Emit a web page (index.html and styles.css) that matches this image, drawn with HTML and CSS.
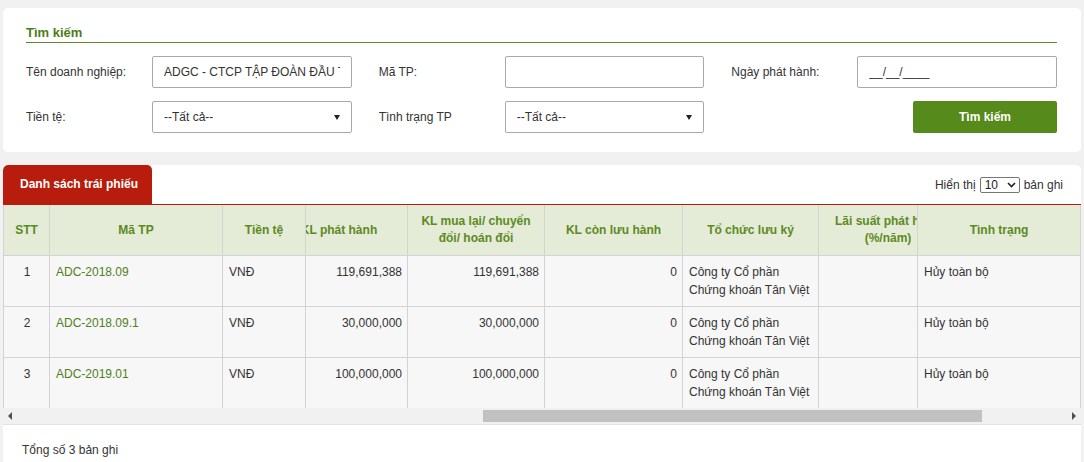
FILE: index.html
```html
<!DOCTYPE html>
<html lang="vi">
<head>
    <meta charset="UTF-8">
    <meta name="viewport" content="width=device-width, initial-scale=1.0">
    <title>Danh sách trái phiếu</title>
    <link rel="stylesheet" href="styles.css">
</head>
<body>
    <!-- Tìm kiếm -->
    <div class="khung tim_kiem">
        <h3 class="tieu_de">Tìm kiếm</h3>
        <div class="luoi">
            <div class="o">
                <label>Tên doanh nghiệp:</label>
                <div class="input"><span class="gia_tri">ADGC - CTCP TẬP ĐOÀN ĐẦU TƯ ĐỊA ỐC</span></div>
            </div>
            <div class="o">
                <label>Mã TP:</label>
                <div class="input"></div>
            </div>
            <div class="o">
                <label>Ngày phát hành:</label>
                <div class="input"><span class="gia_tri">__/__/____</span></div>
            </div>
            <div class="o">
                <label>Tiền tệ:</label>
                <div class="input chon"><span class="gia_tri">--Tất cả--</span></div>
            </div>
            <div class="o">
                <label>Tình trạng TP</label>
                <div class="input chon"><span class="gia_tri">--Tất cả--</span></div>
            </div>
            <div class="o">
                <button class="nut_tim">Tìm kiếm</button>
            </div>
        </div>
    </div>

    <!-- Danh sách -->
    <div class="khung danh_sach">
        <div class="thanh_tab">
            <div class="tab">Danh sách trái phiếu</div>
            <div class="hien_thi">
                Hiển thị
                <div class="chon_nho">
                    <span>10</span>
                    <svg width="9" height="6" viewBox="0 0 9 6"><polyline points="1,1 4.5,4.5 8,1" fill="none" stroke="#222" stroke-width="1.6"/></svg>
                </div>
                bản ghi
            </div>
        </div>

        <div class="bang_cuon">
            <table>
                <colgroup>
                    <col style="width:46px">
                    <col style="width:173px">
                    <col style="width:83px">
                    <col style="width:102px">
                    <col style="width:137px">
                    <col style="width:138px">
                    <col style="width:136px">
                    <col style="width:99px">
                    <col>
                </colgroup>
                <thead>
                    <tr>
                        <th>STT</th>
                        <th>Mã TP</th>
                        <th>Tiền tệ</th>
                        <th class="lech"><div class="lech_kl">KL phát hành</div></th>
                        <th>KL mua lại/ chuyển đổi/ hoán đổi</th>
                        <th>KL còn lưu hành</th>
                        <th>Tổ chức lưu ký</th>
                        <th class="lech"><div class="lech_ls">Lãi suất phát hành (%/năm)</div></th>
                        <th>Tình trạng</th>
                    </tr>
                </thead>
                <tbody>
                    <tr>
                        <td class="giua">1</td>
                        <td><a class="ma">ADC-2018.09</a></td>
                        <td>VNĐ</td>
                        <td class="so">119,691,388</td>
                        <td class="so">119,691,388</td>
                        <td class="so">0</td>
                        <td>Công ty Cổ phần Chứng khoán Tân Việt</td>
                        <td></td>
                        <td>Hủy toàn bộ</td>
                    </tr>
                    <tr>
                        <td class="giua">2</td>
                        <td><a class="ma">ADC-2018.09.1</a></td>
                        <td>VNĐ</td>
                        <td class="so">30,000,000</td>
                        <td class="so">30,000,000</td>
                        <td class="so">0</td>
                        <td>Công ty Cổ phần Chứng khoán Tân Việt</td>
                        <td></td>
                        <td>Hủy toàn bộ</td>
                    </tr>
                    <tr>
                        <td class="giua">3</td>
                        <td><a class="ma">ADC-2019.01</a></td>
                        <td>VNĐ</td>
                        <td class="so">100,000,000</td>
                        <td class="so">100,000,000</td>
                        <td class="so">0</td>
                        <td>Công ty Cổ phần Chứng khoán Tân Việt</td>
                        <td></td>
                        <td>Hủy toàn bộ</td>
                    </tr>
                </tbody>
            </table>
        </div>

        <!-- thanh cuộn ngang -->
        <div class="thanh_cuon">
            <span class="mui_trai"></span>
            <div class="ray"><div class="con_chay"></div></div>
            <span class="mui_phai"></span>
        </div>

        <div class="tong">Tổng số 3 bản ghi</div>
    </div>
</body>
</html>
```

FILE: styles.css
```css
/*body*/
body{
    margin: 8px 3px 0;
    background-color: #f1f1f1;
    font-family: "Liberation Sans", Arial, sans-serif;
    font-size: 12px;
    color: #333;
}
.khung{
    background-color: #fff;
    border-radius: 5px;
}

/*tim kiem*/
.tim_kiem{
    padding: 17px 24px 19px 23px;
    margin-bottom: 13px;
}
.tieu_de{
    margin: 0;
    font-size: 13px;
    line-height: 16px;
    padding-bottom: 1px;
    color: #4c7d17;
    border-bottom: 1px solid #5b8a2a;
}
.luoi{
    display: grid;
    grid-template-columns: repeat(3, minmax(0, 1fr));
    column-gap: 27px;
    row-gap: 13px;
    margin-top: 13px;
}
.o{
    display: flex;
    align-items: center;
    justify-content: flex-end;
    min-width: 0;
}
.o label{
    flex: 0 0 126px;
}
.input{
    flex: 1;
    min-width: 0;
    height: 32px;
    box-sizing: border-box;
    border: 1px solid #a9a9a9;
    border-radius: 2px;
    padding: 0 11px;
    line-height: 30px;
    position: relative;
}
.gia_tri{
    display: block;
    overflow: hidden;
    white-space: nowrap;
}
.chon::after{
    content: "";
    position: absolute;
    right: 11px;
    top: 13px;
    border-left: 3px solid transparent;
    border-right: 3px solid transparent;
    border-top: 5px solid #222;
}
.nut_tim{
    width: 144px;
    height: 32px;
    background-color: #568a1a;
    color: #fff;
    border: none;
    border-radius: 2px;
    font-family: inherit;
    font-size: 12px;
    font-weight: bold;
}

/*danh sach*/
.danh_sach{
    overflow: hidden;
    padding-bottom: 20px;
}
.thanh_tab{
    display: flex;
    justify-content: space-between;
    align-items: center;
    height: 39px;
    border-bottom: 1px solid #b71c0c;
}
.tab{
    width: 149px;
    height: 39px;
    line-height: 39px;
    box-sizing: border-box;
    padding-left: 17px;
    background-color: #b71c0c;
    color: #fff;
    font-weight: bold;
    border-radius: 5px 5px 0 0;
}
.hien_thi{
    display: flex;
    align-items: center;
    gap: 4px;
    padding-right: 18px;
}
.chon_nho{
    width: 40px;
    height: 16px;
    box-sizing: border-box;
    border: 1px solid #767676;
    border-radius: 2px;
    display: flex;
    align-items: center;
    justify-content: space-between;
    padding: 0 3px 0 4px;
    color: #222;
}

/*bang*/
.bang_cuon{
    height: 203px;
    overflow: hidden;
}
table{
    width: 100%;
    border-collapse: collapse;
    table-layout: fixed;
}
th{
    height: 50px;
    background-color: #e4ebd7;
    color: #5c8a22;
    border: 1px solid #d3d3d3;
    border-top: none;
    line-height: 17px;
    padding: 0 4px;
    overflow: hidden;
}
th.lech{
    padding: 0;
}
.lech_kl{
    width: 100px;
    margin-left: -17px;
    white-space: nowrap;
}
.lech_ls{
    width: 138px;
    margin-left: 0;
}
td{
    background-color: #f7f7f7;
    border: 1px solid #d3d3d3;
    vertical-align: top;
    padding: 7px 5px 7px 6px;
    line-height: 18px;
    height: 36px;
}
td.giua{
    text-align: center;
}
td.so{
    text-align: right;
    padding-right: 5px;
}
.ma{
    color: #50801c;
    text-decoration: none;
}

/*thanh cuon*/
.thanh_cuon{
    display: flex;
    align-items: center;
    height: 16px;
    background-color: #f1f1f1;
    border-bottom: 1px solid #e2e2e2;
}
.mui_trai, .mui_phai{
    flex: 0 0 14px;
    display: flex;
    justify-content: center;
}
.mui_trai::before{
    content: "";
    border-top: 4px solid transparent;
    border-bottom: 4px solid transparent;
    border-right: 4px solid #505050;
}
.mui_phai::before{
    content: "";
    border-top: 4px solid transparent;
    border-bottom: 4px solid transparent;
    border-left: 4px solid #505050;
}
.ray{
    flex: 1;
    height: 12px;
}
.con_chay{
    margin-left: 466px;
    width: 499px;
    height: 12px;
    background-color: #c1c1c1;
}
.tong{
    padding: 18px 19px;
}
```
